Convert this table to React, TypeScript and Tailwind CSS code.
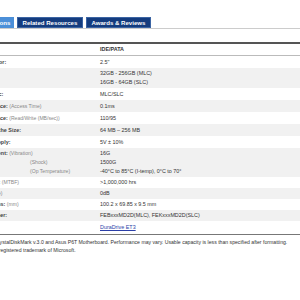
type Row = {
  label: string;
  sub?: string;
  more?: string[];
  vals: string[];
  link?: boolean;
  h: string;
};

const rows: Row[] = [
  { label: "Form Factor:", vals: ['2.5"'], h: "h-[12px]" },
  { label: "Capacity:", vals: ["32GB - 256GB (MLC)", "16GB - 64GB (SLC)"], h: "h-[20px]" },
  { label: "Flash Spec:", vals: ["MLC/SLC"], h: "h-[12px]" },
  { label: "Performance:", sub: "(Access Time)", vals: ["0.1ms"], h: "h-[12px]" },
  { label: "Performance:", sub: "(Read/Write (MB/sec))", vals: ["110/95"], h: "h-[12px]" },
  { label: "DRAM Cache Size:", vals: ["64 MB – 256 MB"], h: "h-[12px]" },
  { label: "Power Supply:", vals: ["5V ± 10%"], h: "h-[12px]" },
  {
    label: "Environment:",
    sub: "(Vibration)",
    more: ["(Shock)", "(Op Temperature)"],
    vals: ["16G", "1500G", "-40°C to 85°C (I-temp), 0°C to 70°"],
    h: "h-[29px]",
  },
  { label: "Reliability:", sub: "(MTBF)", vals: [">1,000,000 hrs"], h: "h-[11px]" },
  { label: "Noise:", sub: "(Idle)", vals: ["0dB"], h: "h-[11px]" },
  { label: "Dimensions:", sub: "(mm)", vals: ["100.2 x 69.85 x 9.5 mm"], h: "h-[11px]" },
  { label: "Part Number:", vals: ["FEBxxxMD2D(MLC), FEKxxxMD2D(SLC)"], h: "h-[11px]" },
  { label: "Series:", vals: ["DuraDrive ET3"], link: true, h: "h-[13px]" },
];

export default function App() {
  return (
    <div
      className="w-[300px] h-[300px] overflow-hidden bg-white text-[#333]"
      style={{ fontFamily: '"Liberation Sans", Arial, sans-serif' }}
    >
      <div className="ml-[-40px] w-[350px]">
        {/* tabs */}
        <div className="pt-[17px] border-b border-[#cccccc]">
          <div className="flex gap-[3px] pl-[4px] h-[11px]">
            <div className="w-[50px] bg-[#4b8fd8] text-white font-bold text-[6.1px] leading-[11px] pl-[5px] whitespace-nowrap">
              Specifications
            </div>
            <div className="bg-[#143c7e] border border-[#3b64a3] text-white font-bold text-[6.1px] leading-[9px] px-[4.5px] whitespace-nowrap">
              Related Resources
            </div>
            <div className="bg-[#143c7e] border border-[#3b64a3] text-white font-bold text-[6.1px] leading-[9px] px-[4.5px] whitespace-nowrap">
              Awards &amp; Reviews
            </div>
          </div>
        </div>

        {/* table */}
        <div className="mt-[13px] border-t-2 border-[#555]">
          <div className="flex h-[12px] items-center border-b border-[#bbbbbb] text-[5.4px] leading-[9px]">
            <div className="w-[140px] pl-[13px] font-bold">Interface</div>
            <div className="font-bold text-[#333]">IDE/PATA</div>
          </div>
          {rows.map((r, i) => (
            <div
              key={i}
              className={`flex ${r.h} items-center text-[5.4px] leading-[9px] ${i % 2 === 1 ? "bg-[#f1f1f1]" : "bg-white"}`}
            >
              <div className="w-[140px] shrink-0 pl-[13px] whitespace-nowrap">
                <div>
                  <span className="font-bold text-[#444]">{r.label}</span>
                  {r.sub && <span className="text-[#888] text-[5.1px]"> {r.sub}</span>}
                </div>
                {r.more?.map((m) => (
                  <div key={m} className="pl-[57px] text-[#888] text-[5.1px]">
                    {m}
                  </div>
                ))}
              </div>
              <div className="whitespace-nowrap">
                {r.vals.map((v) =>
                  r.link ? (
                    <a key={v} href="#" className="text-[#2b3fa8] underline">
                      {v}
                    </a>
                  ) : (
                    <div key={v}>{v}</div>
                  )
                )}
              </div>
            </div>
          ))}
          <div className="border-t border-[#777]" />
        </div>

        {/* notes */}
        <div className="pl-[5px] pt-[3px] text-[5.15px] leading-[8px] text-[#333] whitespace-nowrap">
          <div>
            *Tested with CrystalDiskMark v.3.0 and Asus P6T Motherboard. Performance may vary. Usable capacity is less than specified after formatting.
          </div>
          <div>*Windows is a registered trademark of Microsoft.</div>
        </div>
      </div>
    </div>
  );
}
